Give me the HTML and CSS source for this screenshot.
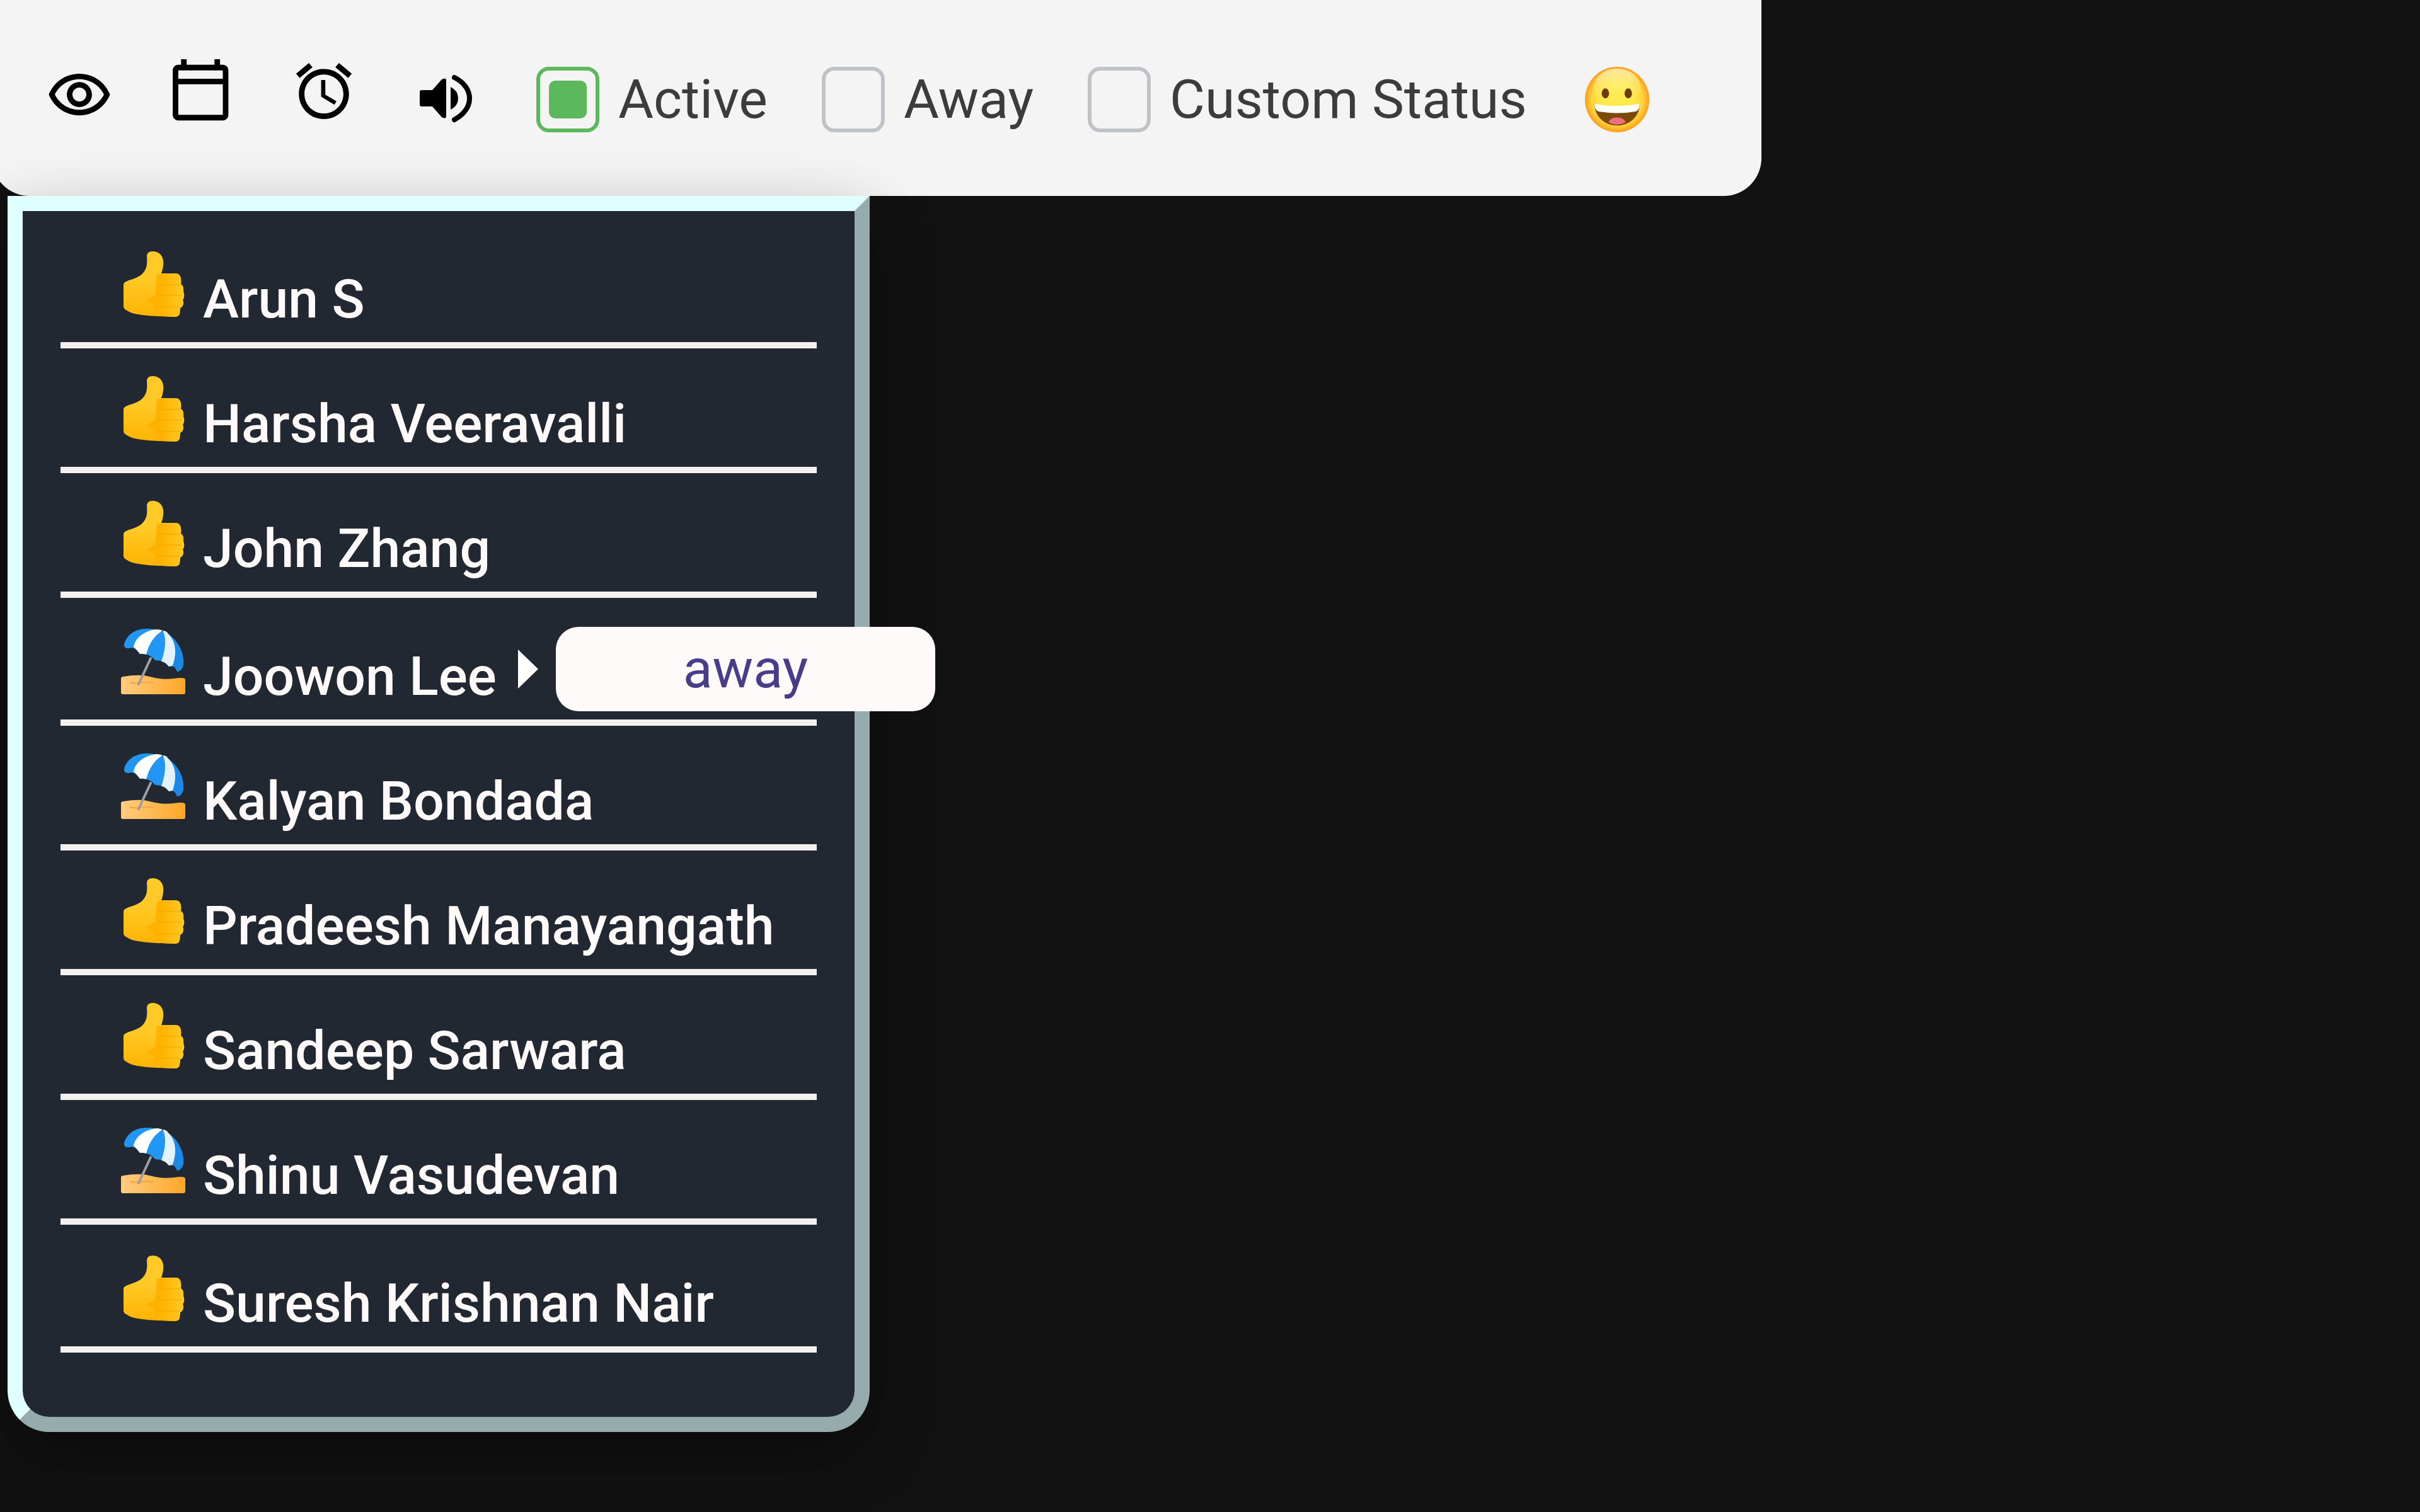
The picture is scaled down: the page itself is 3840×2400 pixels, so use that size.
FILE: index.html
```html
<!DOCTYPE html>
<html lang="en">
<head>
  <meta charset="UTF-8" />
  <title>Team Status</title>
  <meta name="viewport" content="width=device-width, initial-scale=1.0"/>
  <link rel="stylesheet" href="styles.css">
</head>
<body>

  <!-- Shared emoji -->
  <svg class="sprite" aria-hidden="true">
    <defs>
      <linearGradient id="skin" x1="0" y1="0" x2="0" y2="1">
        <stop offset="0.4" stop-color="#ffca28"/>
        <stop offset="1" stop-color="#ffb300"/>
      </linearGradient>
      <linearGradient id="fingers" x1="0" y1="0" x2="1" y2="0">
        <stop offset="0" stop-color="#ffb300"/>
        <stop offset="0.4" stop-color="#ffb300"/>
        <stop offset="1" stop-color="#ffca28"/>
      </linearGradient>
      <linearGradient id="sand" x1="0" y1="0" x2="1" y2="0">
        <stop offset="0" stop-color="#ffcc80"/>
        <stop offset="1" stop-color="#ffa726"/>
      </linearGradient>
      <radialGradient id="face" cx="0.5" cy="0.5" r="0.5">
        <stop offset="0.5" stop-color="#fdea4a"/>
        <stop offset="0.8" stop-color="#fdd33a"/>
        <stop offset="1" stop-color="#ff9d1c"/>
      </radialGradient>
      <linearGradient id="shine" x1="0" y1="0" x2="0" y2="1">
        <stop offset="0" stop-color="#fff3c4" stop-opacity="0.8"/>
        <stop offset="1" stop-color="#ffee58" stop-opacity="0"/>
      </linearGradient>
    </defs>
    <symbol id="thumb" viewBox="0 0 102 106">
      <path fill="url(#skin)" d="M50 1C44 1 41 4 41 9C42 20 41 28 36 34C28 45 12 45 5 51Q4 52 4 55V88Q4 92 8 94C14 98 20 100 27 101C45 104 64 104 84 105Q92 105 93 100L94 91Q99 88 99 83Q99 80 98 78Q101 74 100 69L99 65Q100 56 95 53Q97 37 88 36H64C66 31 68 22 67 16C66 7 60 1 50 1Z"/>
      <path fill="url(#fingers)" d="M57 37H88Q97 38 95 53Q100 56 99 65L100 69Q101 74 98 78Q99 80 99 83Q99 88 94 91L93 100Q92 105 84 105L52 103V85L42 80L54 72Z"/>
      <path fill="none" stroke="#f9a000" stroke-width="1" d="M60 54H94M58 71H96M55 89H93M42 80L54 72"/>
    </symbol>
    <symbol id="beach" viewBox="0 0 102 106">
      <path fill="url(#sand)" d="M0 80Q0 77 4 77Q20 74 36 75Q46 77 54 79Q70 82 84 80Q102 77 102 82V102Q102 105 99 105H3Q0 105 0 102Z"/>
      <path fill="none" stroke="#f2a545" stroke-width="2" d="M14 86C28 91 36 83 52 87"/>
      <path fill="none" stroke="#9e9e9e" stroke-width="4" stroke-linecap="round" d="M47 48L28 89"/>
      <path fill="#2196f3" d="M5 25C10 8 26 0 44 1C76 2 101 28 99 58Q97 68 89 69C86 60 82 60 76 61C68 51 62 52 54 51C46 41 38 41 30 41C24 32 18 30 13 32Q4 33 5 25Z"/>
      <path fill="#fff" d="M55 2Q62 2 66 4C52 12 44 26 40 42Q35 40 30 41Q24 33 20 30C22 16 36 5 55 2Z"/>
      <path fill="#e3f2fd" d="M66 4Q72 4 75 9C89 22 88 43 82 60Q79 60 76 61C71 55 67 53 64 53C70 36 73 16 66 4Z"/>
      <path fill="#1e88e5" d="M75 9C92 22 100 38 99 58Q97 68 89 69Q87 62 82 60C88 43 89 22 75 9Z"/>
    </symbol>
  </svg>

  <!-- Status bar -->
  <header class="status-bar">
    <div class="tools">
      <button class="icon-btn" aria-label="Watch">
        <svg viewBox="0 1.3 24 24"><path d="M12 6c3.79 0 7.17 2.13 8.82 5.5C19.17 14.87 15.79 17 12 17s-7.17-2.13-8.82-5.5C4.83 8.13 8.21 6 12 6m0-2C7 4 2.73 7.11 1 11.5 2.73 15.89 7 19 12 19s9.27-3.11 11-7.5C21.27 7.11 17 4 12 4zm0 5c1.38 0 2.5 1.12 2.5 2.5S13.38 14 12 14s-2.5-1.12-2.5-2.5S10.62 9 12 9m0-2c-2.48 0-4.5 2.02-4.5 4.5S9.52 16 12 16s4.5-2.02 4.5-4.5S14.48 7 12 7z"/></svg>
      </button>
      <button class="icon-btn" aria-label="Calendar">
        <svg viewBox="0.4 3.5 24 24"><path d="M20 3h-1V1h-2v2H7V1H5v2H4c-1.1 0-2 .9-2 2v16c0 1.1.9 2 2 2h16c1.1 0 2-.9 2-2V5c0-1.1-.9-2-2-2zm0 18H4V10h16v11zm0-13H4V5h16v3z"/></svg>
      </button>
      <button class="icon-btn" aria-label="Alarm">
        <svg viewBox="0 3 24 24"><path d="M22 5.72l-4.6-3.86-1.29 1.53 4.6 3.86L22 5.72zM7.88 3.39L6.6 1.86 2 5.71l1.29 1.53 4.59-3.85zM12.5 8H11v6l4.75 2.85.75-1.23-4-2.37V8zM12 4c-4.97 0-9 4.03-9 9s4.02 9 9 9c4.97 0 9-4.03 9-9s-4.03-9-9-9zm0 16c-3.87 0-7-3.13-7-7s3.13-7 7-7 7 3.13 7 7-3.13 7-7 7z"/></svg>
      </button>
      <button class="icon-btn" aria-label="Sound">
        <svg viewBox="0 0 106 106"><path d="M11 41Q11 38 14 38H31L46 21Q53 17 53 23V79Q53 85 46 81L31 64H14Q11 64 11 61ZM60 33Q72 39 72 51T60 69Z"/><path fill="none" stroke="#000" stroke-width="8" stroke-linecap="round" d="M66 18C98 34 98 68 66 85"/></svg>
      </button>
    </div>

    <div class="choices">
      <label class="choice"><input type="radio" name="status" checked> Active</label>
      <label class="choice"><input type="radio" name="status"> Away</label>
      <label class="choice"><input type="radio" name="status"> Custom Status</label>
    </div>

    <button class="emoji-btn" aria-label="Pick emoji">
      <svg viewBox="0 0 106 108">
        <ellipse cx="53" cy="54" rx="52" ry="53" fill="url(#face)"/>
        <ellipse cx="53" cy="34" rx="38" ry="30" fill="url(#shine)"/>
        <ellipse cx="34" cy="44" rx="6" ry="8" fill="#6d3a12"/>
        <ellipse cx="71" cy="44" rx="6" ry="8" fill="#6d3a12"/>
        <path fill="#7a4a08" d="M17 62Q53 70 89 62C90 80 74 96 53 96S16 80 17 62Z"/>
        <path fill="#fff" d="M17 61Q53 68 89 61Q90 69 84 73Q53 79 22 73Q16 69 17 61Z"/>
        <path fill="#f06e7e" d="M39 91Q42 83 53 83T67 91Q53 98 39 91Z"/>
      </svg>
    </button>
  </header>

  <!-- Team list -->
  <ul class="team">
    <li><svg class="mood"><use href="#thumb"/></svg><span>Arun S</span></li>
    <li><svg class="mood"><use href="#thumb"/></svg><span>Harsha Veeravalli</span></li>
    <li><svg class="mood"><use href="#thumb"/></svg><span>John Zhang</span></li>
    <li class="has-note">
      <svg class="mood"><use href="#beach"/></svg><span>Joowon Lee</span>
      <div class="note">
        <svg class="caret" viewBox="0 0 32 62"><path d="M0 0L32 31L0 62Z"/></svg>
        <span class="note-text">away</span>
      </div>
    </li>
    <li><svg class="mood"><use href="#beach"/></svg><span>Kalyan Bondada</span></li>
    <li><svg class="mood"><use href="#thumb"/></svg><span>Pradeesh Manayangath</span></li>
    <li><svg class="mood"><use href="#thumb"/></svg><span>Sandeep Sarwara</span></li>
    <li><svg class="mood"><use href="#beach"/></svg><span>Shinu Vasudevan</span></li>
    <li><svg class="mood"><use href="#thumb"/></svg><span>Suresh Krishnan Nair</span></li>
  </ul>

</body>
</html>
```
FILE: styles.css
```css
* {
  box-sizing: border-box;
  margin: 0;
  padding: 0;
  font-family: Roboto, sans-serif;
}

body {
  background: #121212;
  color: #3c3c3c;
  min-height: 100vh;
  font-size: 86px;
  line-height: 104px;
}

.sprite {
  position: absolute;
  width: 0;
  height: 0;
}

button {
  background: none;
  border: none;
  cursor: pointer;
}

button svg {
  display: block;
  width: 106px;
  height: 106px;
  overflow: visible;
}

.status-bar {
  display: flex;
  align-items: center;
  width: fit-content;
  margin-left: -13px;
  padding: 105px 176px 100px 86px;
  background: #f4f4f4;
  border-radius: 0 0 60px 60px;
}

.tools {
  display: flex;
  gap: 88px;
  margin-right: 90px;
}

.choices {
  display: flex;
  gap: 86px;
  margin-right: 90px;
  font-weight: 400;
}

.choice {
  display: flex;
  align-items: center;
  gap: 30px;
}

.choice input {
  appearance: none;
  display: grid;
  place-items: center;
  width: 100px;
  height: 104px;
  border: 6px solid #bdc3c7;
  border-radius: 20px;
}

.choice input:checked {
  border-color: #5cb85c;
}

.choice input:checked::before {
  content: '';
  width: 60px;
  height: 60px;
  border-radius: 10px;
  background: #5cb85c;
}

.team {
  width: fit-content;
  margin-left: 12px;
  padding: 20px 60px 102px;
  list-style: none;
  color: snow;
  font-weight: 500;
  background: #222831;
  border: 24px outset lightcyan;
  border-radius: 0 0 66px 66px;
  box-shadow: 0 48px 96px rgba(0, 0, 0, 0.2), 0 36px 120px rgba(0, 0, 0, 0.19);
}

.team li {
  display: flex;
  align-items: baseline;
  padding: 43px 67px 16px 96px;
  border-bottom: 10px solid #f5f0f0;
}

.team .has-note,
.team li:last-child {
  padding-top: 48px;
}

.mood {
  width: 102px;
  height: 106px;
  margin-right: 28px;
}

.note {
  position: relative;
  align-self: center;
  margin-left: 34px;
}

.caret {
  display: block;
  width: 32px;
  height: 62px;
  fill: #fff;
}

.note-text {
  position: absolute;
  top: 50%;
  left: 60px;
  padding: 0 202px;
  line-height: 134px;
  font-weight: 400;
  color: darkslateblue;
  background: snow;
  border-radius: 36px;
  transform: translateY(-50%);
}
```
